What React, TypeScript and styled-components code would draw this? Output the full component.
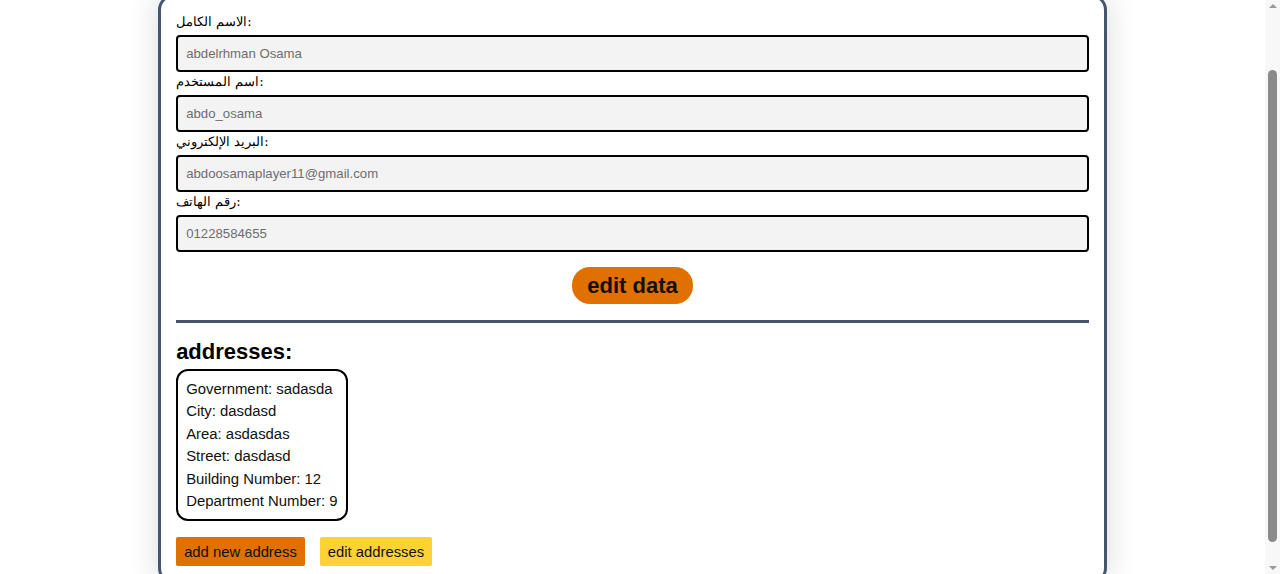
import * as React from 'react';
import styled, { createGlobalStyle } from 'styled-components';

const GlobalStyle = createGlobalStyle`
  html, body {
    margin: 0;
    padding: 0;
    background: #fff;
  }
  body {
    font-family: Arial, "Liberation Sans", "DejaVu Sans", sans-serif;
    color: #000;
  }
`;

const Page = styled.div`
  padding: 61px 15px 14px 0;
`;

const Card = styled.div`
  width: 75%;
  margin: 0 auto;
  box-sizing: border-box;
  border: 3px solid #45556c;
  border-radius: 16px;
  padding: 15px;
  background: #fff;
  box-shadow: 0 0 30px rgba(15, 23, 42, 0.16);
`;

const Field = styled.div`
  display: flex;
  flex-direction: column;
`;

const Label = styled.label`
  font-family: "DejaVu Serif", "Liberation Serif", serif;
  font-size: 13px;
  line-height: 20px;
  margin-bottom: 3px;
`;

const Input = styled.input`
  box-sizing: border-box;
  height: 37px;
  width: 100%;
  border: 2px solid #000;
  border-radius: 4px;
  background: #f3f3f3;
  color: #6d6d6d;
  font-family: Arial, "Liberation Sans", sans-serif;
  font-size: 13.2px;
  padding: 0 8px;
  outline: none;
`;

const Center = styled.div`
  display: flex;
  justify-content: center;
  margin-top: 15px;
`;

const EditButton = styled.button`
  background: #e07000;
  color: #111;
  border: none;
  border-radius: 18px;
  font-family: Arial, "Liberation Sans", sans-serif;
  font-weight: bold;
  font-size: 22px;
  line-height: 25px;
  height: 37px;
  padding: 0 15px;
  cursor: pointer;
`;

const Divider = styled.hr`
  border: none;
  height: 3px;
  background: #45556c;
  margin: 16px 0;
`;

const Heading = styled.h2`
  font-size: 22px;
  line-height: 25px;
  font-weight: bold;
  margin: 0 0 5px;
`;

const AddressBox = styled.div`
  width: fit-content;
  border: 2px solid #000;
  border-radius: 12px;
  padding: 7px 8px;
`;

const AddressLine = styled.p`
  margin: 0;
  font-size: 14.9px;
  line-height: 22.4px;
  color: #111;
`;

const Actions = styled.div`
  display: flex;
  gap: 15px;
  margin-top: 16px;
`;

const ActionButton = styled.button<{ $tone: 'orange' | 'yellow' }>`
  background: ${p => (p.$tone === 'orange' ? '#e07000' : '#fdd235')};
  color: #111;
  border: none;
  border-radius: 2px;
  height: 29px;
  padding: 0 8px;
  font-family: Arial, "Liberation Sans", sans-serif;
  font-size: 14.8px;
  cursor: pointer;
`;

/* stand-in for the browser scrollbar seen in the screenshot */
const ScrollTrack = styled.div`
  position: fixed;
  top: 0;
  right: 0;
  width: 15px;
  height: 100vh;
  background: #f8f8f8;
`;

const ScrollArrow = styled.div<{ $down?: boolean }>`
  position: absolute;
  left: 4px;
  ${p => (p.$down ? 'bottom: 4px;' : 'top: 4px;')}
  width: 0;
  height: 0;
  border-left: 4px solid transparent;
  border-right: 4px solid transparent;
  ${p => (p.$down ? 'border-top: 4px solid #9a9a9a;' : 'border-bottom: 4px solid #9a9a9a;')}
`;

const ScrollThumb = styled.div`
  position: absolute;
  left: 3px;
  top: 70px;
  width: 9px;
  height: 472px;
  border-radius: 5px;
  background: #8b8b8b;
`;

const fields = [
  { label: 'الاسم الكامل:', value: 'abdelrhman Osama' },
  { label: 'اسم المستخدم:', value: 'abdo_osama' },
  { label: 'البريد الإلكتروني:', value: 'abdoosamaplayer11@gmail.com' },
  { label: 'رقم الهاتف:', value: '01228584655' },
];

const address = [
  'Government: sadasda',
  'City: dasdasd',
  'Area: asdasdas',
  'Street: dasdasd',
  'Building Number: 12',
  'Department Number: 9',
];

const App = () => {
  React.useLayoutEffect(() => {
    window.scrollTo(0, 67);
  }, []);

  return (
    <Page>
      <GlobalStyle />
      <Card>
        {fields.map((f, i) => (
          <Field key={i}>
            <Label>{f.label}</Label>
            <Input value={f.value} readOnly />
          </Field>
        ))}
        <Center>
          <EditButton>edit data</EditButton>
        </Center>
        <Divider />
        <Heading>addresses:</Heading>
        <AddressBox>
          {address.map((line, i) => (
            <AddressLine key={i}>{line}</AddressLine>
          ))}
        </AddressBox>
        <Actions>
          <ActionButton $tone="orange">add new address</ActionButton>
          <ActionButton $tone="yellow">edit addresses</ActionButton>
        </Actions>
      </Card>
      <ScrollTrack>
        <ScrollArrow />
        <ScrollThumb />
        <ScrollArrow $down />
      </ScrollTrack>
    </Page>
  );
};

export default App;
